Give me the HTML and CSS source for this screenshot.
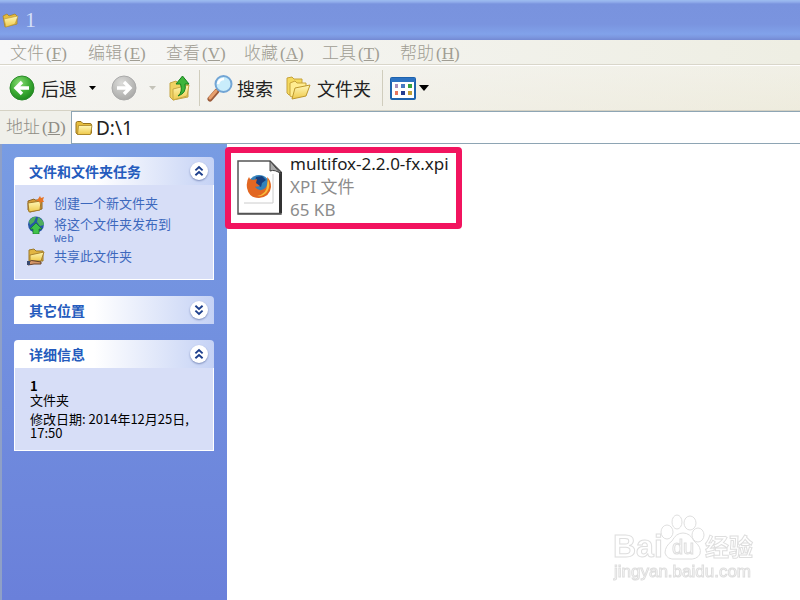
FILE: index.html
```
<!DOCTYPE html>
<html lang="zh-CN">
<head>
    <meta charset="UTF-8">
    <meta name="viewport" content="width=device-width, initial-scale=1.0">
    <title>1</title>
    <link rel="stylesheet" href="styles.css">
</head>
<body>
    <!-- Shared shapes -->
    <svg class="defs" width="0" height="0" aria-hidden="true">
        <defs>
            <linearGradient id="paper" x1="0" y1="0" x2="0" y2="1">
                <stop offset="0" stop-color="#fff8b8"/>
                <stop offset="1" stop-color="#efc94a"/>
            </linearGradient>
            <radialGradient id="green" cx=".4" cy=".3" r=".8">
                <stop offset="0" stop-color="#8bdc76"/>
                <stop offset=".5" stop-color="#3fae35"/>
                <stop offset="1" stop-color="#168018"/>
            </radialGradient>
            <radialGradient id="grey" cx=".4" cy=".3" r=".8">
                <stop offset="0" stop-color="#dcdcda"/>
                <stop offset="1" stop-color="#a3a3a1"/>
            </radialGradient>
            <symbol id="folder" viewBox="0 0 18 16">
                <path d="M1 3.500Q1 1.500 2.500 1.500H6L8 3.500H15Q16.500 3.500 16.500 5V13L15 14.500H3L1 13Z" fill="#e6bd3d" stroke="#96731c"/>
                <path d="M3.500 5.500H17L15.500 14.500H2.500Z" fill="url(#paper)" stroke="#a98528" stroke-width=".8"/>
            </symbol>
            <symbol id="up" viewBox="0 0 10 10">
                <path d="M2 4.500 5 1.800 8 4.500M2 8.500 5 5.800 8 8.500" fill="none" stroke="#1d3f8c" stroke-width="1.600"/>
            </symbol>
            <symbol id="down" viewBox="0 0 10 10">
                <path d="M2 1.500 5 4.200 8 1.500M2 5.500 5 8.200 8 5.500" fill="none" stroke="#1d3f8c" stroke-width="1.600"/>
            </symbol>
        </defs>
    </svg>

    <header class="titlebar">
        <svg width="17" height="16" viewBox="0 0 17 16">
            <path d="M1 4 5 2 7 4 13 2 15 4V12L3 15Z" fill="#e6bd3d" stroke="#a98528" stroke-width=".8"/>
            <path d="M2 7 16 4 13 12 4 15Z" fill="url(#paper)" stroke="#b8963a" stroke-width=".6"/>
        </svg>
        <h1>1</h1>
    </header>

    <nav class="menubar">
        <button type="button">文件<span>(<u>F</u>)</span></button>
        <button type="button">编辑<span>(<u>E</u>)</span></button>
        <button type="button">查看<span>(<u>V</u>)</span></button>
        <button type="button">收藏<span>(<u>A</u>)</span></button>
        <button type="button">工具<span>(<u>T</u>)</span></button>
        <button type="button">帮助<span>(<u>H</u>)</span></button>
    </nav>

    <div class="toolbar">
        <button type="button" class="back">
            <svg width="26" height="26" viewBox="0 0 26 26">
                <circle cx="13" cy="13" r="12" fill="url(#green)" stroke="#2b8a2a"/>
                <path d="M20 13H8M13 7 7 13l6 6" fill="none" stroke="#fff" stroke-width="3.400"/>
            </svg>
            后退
            <svg class="arrow" width="7" height="4" viewBox="0 0 7 4"><path d="M0 0H7L3.500 4Z" fill="#000"/></svg>
        </button>
        <button type="button" class="forward" aria-label="前进">
            <svg width="26" height="26" viewBox="0 0 26 26">
                <circle cx="13" cy="13" r="12" fill="url(#grey)" stroke="#aaa"/>
                <path d="M6 13H18M13 7l6 6-6 6" fill="none" stroke="#fff" stroke-width="3.400"/>
            </svg>
            <svg class="arrow" width="7" height="4" viewBox="0 0 7 4"><path d="M0 0H7L3.500 4Z" fill="#c4c3b9"/></svg>
        </button>
        <button type="button" class="parent" aria-label="向上">
            <svg width="22" height="26" viewBox="0 0 22 26">
                <path d="M1 8 7 6l2 2 10 0v14L4 25 1 22Z" fill="#f0d262" stroke="#c4a544"/>
                <path d="M4 14 20 10 18 21 4 25Z" fill="url(#paper)" stroke="#c9a947"/>
                <path d="M9 21Q14 17 11.500 9H7L13.500 1 20 9H16Q18 18 9 21Z" fill="#3eb53a" stroke="#16811e"/>
            </svg>
        </button>
        <button type="button" class="search">
            <svg width="26" height="28" viewBox="0 0 26 28">
                <path d="M10 17 3 25" stroke="#9b5b3b" stroke-width="5" stroke-linecap="round"/>
                <path d="M9 17 3 24" stroke="#e8a16e" stroke-width="3" stroke-linecap="round"/>
                <circle cx="16.500" cy="10" r="8" fill="#c9edfb" stroke="#72a5d5" stroke-width="2"/>
                <path d="M11 10Q12 5 17 5" fill="none" stroke="#fff" stroke-width="2.500"/>
            </svg>
            搜索
        </button>
        <button type="button" class="folders">
            <svg width="25" height="24" viewBox="0 0 25 24">
                <path d="M1 2 6 1 8 3H16V15L3 19 1 17Z" fill="#f4d95e" stroke="#c7a33a"/>
                <path d="M4 7 9 5 11 7H20V18L6 21 4 20Z" fill="#ffed91" stroke="#c7a33a"/>
                <path d="M9 12 24 9 20 20 6 23Z" fill="url(#paper)" stroke="#bd982e"/>
            </svg>
            文件夹
        </button>
        <button type="button" class="views" aria-label="查看">
            <svg width="26" height="23" viewBox="0 0 26 23">
                <rect x="1" y="1" width="24" height="21" rx="1" fill="#fff" stroke="#1d62ad" stroke-width="2"/>
                <path d="M1 3H25" stroke="#2d73c2" stroke-width="4"/>
                <path d="M5 7h3v4H5z" fill="#a78fbb"/><path d="M11 7h4v4h-4z" fill="#477ac1"/><path d="M18 7h4v4h-4z" fill="#35a23f"/>
                <path d="M5 14h3v4H5z" fill="#e8755d"/><path d="M11 14h4v4h-4z" fill="#243e92"/><path d="M18 14h4v4h-4z" fill="#c19f35"/>
            </svg>
            <svg width="10" height="6" viewBox="0 0 10 6"><path d="M0 0H10L5 6Z" fill="#000"/></svg>
        </button>
    </div>

    <div class="address">
        <label for="path">地址<span>(<u>D</u>)</span></label>
        <div class="address-box">
            <svg width="18" height="16"><use href="#folder"/></svg>
            <input type="text" id="path" value="D:\1">
        </div>
    </div>

    <div class="content">
        <aside class="sidebar">
            <section class="panel">
                <div class="panel-head">
                    <h2>文件和文件夹任务</h2>
                    <button type="button" aria-label="折叠"><svg width="12" height="12"><use href="#up"/></svg></button>
                </div>
                <ul class="tasks">
                    <li>
                        <svg width="18" height="18" viewBox="0 0 18 18">
                            <path d="M1 6 7 4 8 5H15V14L3 17 1 15Z" fill="#d59b36" stroke="#8c6526"/>
                            <path d="M1 8 14 6 13 15 2 17Z" fill="url(#paper)" stroke="#a37b2a"/>
                            <path d="M13 1l1 2 3-1-1 3 1 2-3 0-1 2-1-3-3 0 2-2Z" fill="#e67526"/>
                        </svg>
                        <a href="#">创建一个新文件夹</a>
                    </li>
                    <li>
                        <svg width="18" height="18" viewBox="0 0 18 18">
                            <circle cx="9" cy="8.500" r="8" fill="#2557a6"/>
                            <path d="M2 5Q6 0 9 1L7 6 3 9ZM11 1Q17 4 17 9L13 10 10 6Z" fill="#4fae5d"/>
                            <path d="M9 7 15 13H12V18H6V13H3Z" fill="#3fc34a" stroke="#197528" stroke-width=".7"/>
                        </svg>
                        <a href="#">将这个文件夹发布到<small>Web</small></a>
                    </li>
                    <li>
                        <svg width="18" height="18" viewBox="0 0 18 18">
                            <path d="M2 2 7 1 9 3H16V13H2Z" fill="#e2b542" stroke="#9b7829"/>
                            <path d="M3 7 17 4 14 13H3Z" fill="url(#paper)" stroke="#a9822d"/>
                            <path d="M1 15Q4 11 8 13L14 14V16H7L1 17Z" fill="#d59669" stroke="#65422a"/>
                            <path d="M0 13h3v4H0z" fill="#394a71"/>
                        </svg>
                        <a href="#">共享此文件夹</a>
                    </li>
                </ul>
            </section>

            <section class="panel">
                <div class="panel-head">
                    <h2>其它位置</h2>
                    <button type="button" aria-label="展开"><svg width="12" height="12"><use href="#down"/></svg></button>
                </div>
            </section>

            <section class="panel">
                <div class="panel-head">
                    <h2>详细信息</h2>
                    <button type="button" aria-label="折叠"><svg width="12" height="12"><use href="#up"/></svg></button>
                </div>
                <div class="details">
                    <b>1</b>
                    <p>文件夹</p>
                    <p class="date">修改日期: 2014年12月25日, 17:50</p>
                </div>
            </section>
        </aside>

        <main class="files">
            <div class="file">
                <svg width="46" height="56" viewBox="0 0 46 56">
                    <path d="M1 1H33L44 12V54H1Z" fill="#fff" stroke="#555" stroke-width="1.500"/>
                    <path d="M43.500 12V53" fill="none" stroke="#333" stroke-width="3"/>
                    <path d="M1 53.500H44" fill="none" stroke="#555" stroke-width="1.500"/>
                    <path d="M33 1 44 14Q38 9 33 11Z" fill="#aaa" stroke="#444"/>
                    <path d="M7 43H36V14" fill="none" stroke="#ccc"/>
                    <circle cx="22" cy="26" r="11" fill="#3382bb"/>
                    <path d="M19 17l6-1 4 4-4 3-1 4-4-2-3 3Z" fill="#173f80"/>
                    <path d="M12 17Q9 21 10 28 12 38 22 38 33 37 34 27 34 20 30 17 32 26 27 29 22 32 18 27L23 26 19 23 20 19 16 20 13 19Z" fill="#e26722"/>
                    <path d="M31 19Q34 26 30 32 26 37 20 36 30 34 30 25Z" fill="#f8bb3b"/>
                </svg>
                <div class="file-text">
                    <strong>multifox-2.2.0-fx.xpi</strong>
                    <span>XPI 文件</span>
                    <span>65 KB</span>
                </div>
            </div>
        </main>
    </div>

    <svg class="watermark" width="150" height="72" viewBox="0 0 150 72">
        <text class="brand" x="3" y="44">Bai</text>
        <ellipse cx="57" cy="19" rx="6" ry="7"/>
        <ellipse cx="67" cy="9" rx="5" ry="7"/>
        <ellipse cx="80" cy="10" rx="6" ry="7"/>
        <ellipse cx="88" cy="22" rx="6" ry="7"/>
        <path d="M73 20Q80 20 84 28 92 34 90 41 87 47 78 46H66Q57 47 55 40 55 33 62 28 66 20 73 20Z"/>
        <text class="du" x="62" y="41">du</text>
        <text class="cn" x="95" y="43">经验</text>
        <text class="site" x="4" y="64">jingyan.baidu.com</text>
    </svg>
</body>
</html>
```
FILE: styles.css
```
* {
    box-sizing: border-box;
}

body, html {
    margin: 0;
    padding: 0;
    min-height: 100%;
}

body {
    display: flex;
    flex-direction: column;
    min-height: 100vh;
    background-color: #fff;
    color: #000;
    font-family: "Noto Sans", "Noto Sans CJK SC", sans-serif;
}

button {
    margin: 0;
    padding: 0;
    border: 0;
    background: none;
    color: inherit;
    font: inherit;
}

h1, h2, p, ul {
    margin: 0;
    padding: 0;
}

svg {
    display: block;
    flex: none;
}

.defs {
    position: absolute;
}

/* Title bar */
.titlebar {
    display: flex;
    align-items: center;
    gap: 6px;
    height: 40px;
    padding-left: 2px;
    background: linear-gradient(#9dbdf0 0, #91adeb 2px, #7993de 4px, #7a94df 24px, #81a2ea 34px, #7d98e0 37px, #7389d3 40px);
}

.titlebar h1 {
    color: #d3def8;
    font: 22px "Liberation Serif", serif;
}

/* Menu bar */
.menubar {
    display: grid;
    grid-template-columns: repeat(6, 78px);
    height: 25px;
    padding-left: 10px;
    border-bottom: 1px solid #d9d6ca;
    background: linear-gradient(90deg, #f7f7f7, #eeeee3);
    color: #a09d93;
}

.menubar button {
    text-align: left;
}

.menubar button, .address label {
    font: 17px/24px "Noto Sans CJK SC", sans-serif;
    font-weight: 300;
    white-space: nowrap;
}

.menubar span, .address span {
    margin-left: 2px;
    font-family: "Liberation Serif", serif;
}

/* Toolbar */
.toolbar {
    display: flex;
    align-items: center;
    height: 46px;
    padding-left: 9px;
    border-top: 1px solid #fff;
    border-bottom: 1px solid #d5d2c4;
    background: linear-gradient(90deg, rgba(246, 246, 246, 0.8), rgba(238, 237, 225, 0.3)), linear-gradient(#f2f1e8, #eeebdc);
    color: #222;
    font: 18px/24px "Noto Sans CJK SC", sans-serif;
}

.toolbar button {
    display: flex;
    align-items: center;
    height: 36px;
}

.back {
    gap: 6px;
}

.back .arrow {
    margin-left: 6px;
}

.forward {
    gap: 12px;
    margin-left: 15px;
}

.parent {
    margin-left: 13px;
}

.toolbar .search {
    gap: 4px;
    margin-left: 8px;
    padding-left: 7px;
    border-left: 1px solid #d0cdbd;
}

.folders {
    gap: 6px;
    margin-left: 13px;
}

.toolbar .views {
    gap: 3px;
    margin-left: 11px;
    padding-left: 7px;
    border-left: 1px solid #d0cdbd;
}

/* Address bar */
.address {
    display: flex;
    height: 33px;
    background-color: #f0f0ea;
}

.address label {
    width: 71px;
    padding: 3px 0 0 6px;
    color: #8f8d85;
}

.address-box {
    display: flex;
    flex: 1;
    align-items: center;
    gap: 3px;
    padding-left: 3px;
    border: solid #8ea5b4;
    border-width: 1px 0 1px 1px;
    background-color: #fff;
}

.address-box input {
    flex: 1;
    min-width: 0;
    padding: 0;
    border: 0;
    background: none;
    outline: none;
    color: #222;
    font: 19px/24px "Noto Sans", sans-serif;
}

/* Content */
.content {
    display: flex;
    flex: 1;
}

.sidebar {
    display: flex;
    flex-direction: column;
    flex: none;
    gap: 16px;
    width: 227px;
    padding: 13px 13px 13px 12px;
    border-left: 2px solid #8fa0c6;
    background: linear-gradient(#789ce3, #6a80da);
    font: 13px/14px "Noto Sans CJK SC", sans-serif;
}

.panel-head {
    display: flex;
    align-items: center;
    justify-content: space-between;
    height: 28px;
    padding: 0 6px 0 15px;
    border-radius: 4px 4px 0 0;
    background: linear-gradient(90deg, #fff 40%, #c5d2f5);
}

.panel-head h2 {
    color: #245bbd;
    font-size: 14px;
    line-height: 20px;
}

.panel-head button {
    display: flex;
    align-items: center;
    justify-content: center;
    width: 18px;
    height: 18px;
    border-radius: 50%;
    background-color: #fff;
    box-shadow: 0 1px 2px #7b8cba;
}

.tasks, .details {
    border: 1px solid #fff;
    border-top: 0;
    background-color: #d7def7;
}

.tasks {
    display: flex;
    flex-direction: column;
    gap: 3px;
    padding: 10px 12px 13px;
    list-style: none;
}

.tasks li {
    display: flex;
    gap: 9px;
}

.tasks a {
    padding-top: 1px;
    color: #3c68bd;
    text-decoration: none;
    white-space: nowrap;
}

.tasks a:hover {
    text-decoration: underline;
}

.tasks small {
    display: block;
    padding-top: 2px;
    font: 11px/12px "Liberation Mono", monospace;
}

.details {
    padding: 11px 15px 10px;
}

.details b {
    display: block;
}

.details .date {
    margin-top: 5px;
}

/* File list */
.files {
    flex: 1;
    padding-top: 3px;
}

.file {
    display: flex;
    align-items: center;
    gap: 7px;
    width: 237px;
    height: 82px;
    margin-left: -2px;
    padding-left: 6px;
    border: 6px solid #f2145f;
    border-radius: 4px;
}

.file-text {
    display: flex;
    flex-direction: column;
    padding-bottom: 4px;
    color: #8c8c8c;
    font-size: 17px;
    line-height: 23px;
    white-space: nowrap;
}

.file-text strong {
    color: #1c1c1c;
    font-weight: normal;
}

/* Watermark over the file list */
.watermark {
    position: fixed;
    right: 40px;
    bottom: 15px;
    fill: #fff;
    stroke: #dedede;
    stroke-width: 1;
    font-family: "Liberation Sans", "Noto Sans CJK SC", sans-serif;
}

.watermark .brand {
    font-size: 32px;
    font-weight: bold;
}

.watermark .du {
    font-size: 20px;
}

.watermark .cn {
    font-size: 24px;
    font-weight: bold;
}

.watermark .site {
    font-size: 17px;
}
```
